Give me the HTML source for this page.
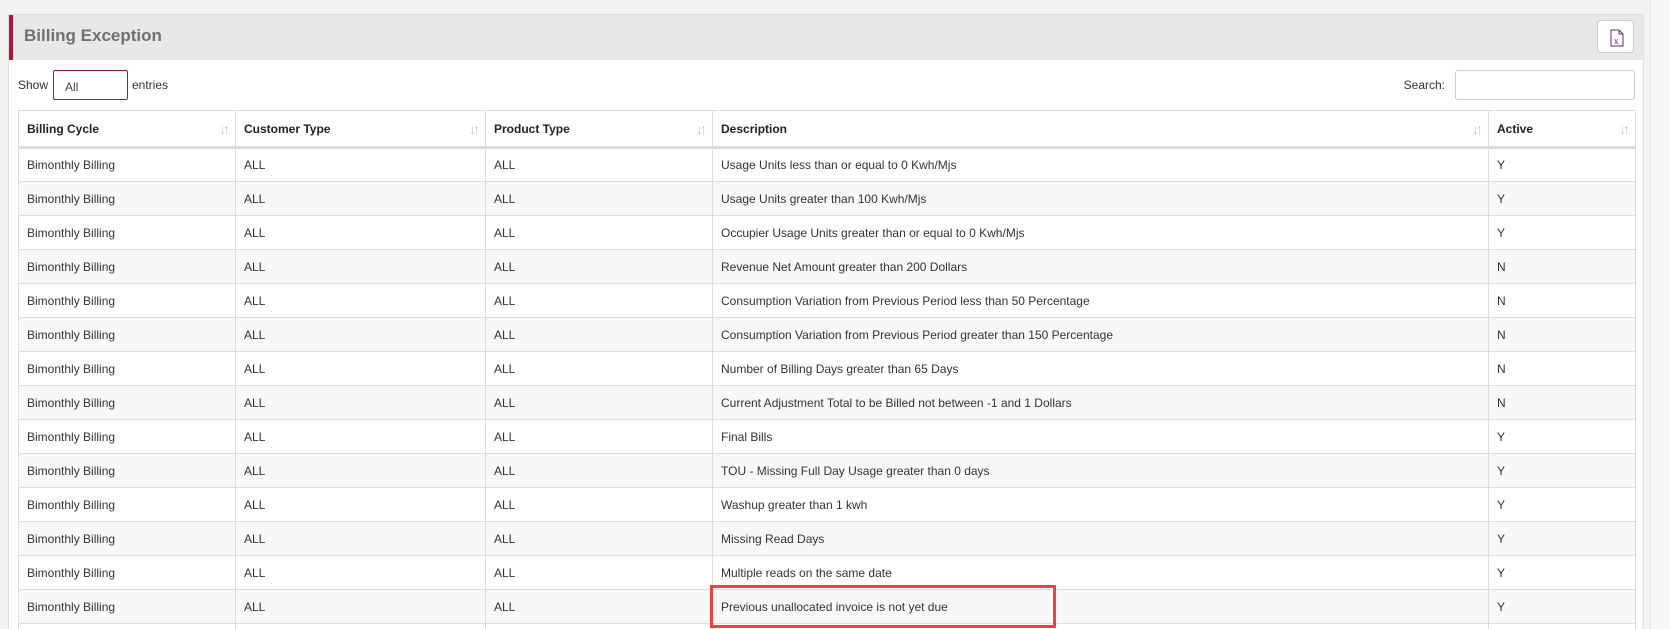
<!DOCTYPE html>
<html style="height:629px;overflow:hidden"><head><style>
*{box-sizing:border-box;margin:0;padding:0}
body{width:1670px;height:629px;background:#f3f3f3;font-family:"Liberation Sans",sans-serif;font-size:12px;color:#333;overflow:hidden;position:relative}
.panel{position:absolute;left:8px;top:14px;width:1636px;height:615px;background:#fff;border:1px solid #e0e0e0;border-bottom:none;overflow:hidden}
.hdr{height:45px;background:#e8e8e8;border-left:4px solid #b0163a;position:relative}
.hdr h2{position:absolute;left:11px;top:11px;font-size:17px;font-weight:bold;color:#707070}
.xbtn{position:absolute;right:9px;top:5px;width:37px;height:33px;background:#fff;border:1px solid #ccc;border-radius:4px}
.show{position:absolute;left:9px;top:55px;width:1617px;height:30px}
.show span{position:absolute;top:8px}
.sel{position:absolute;left:35px;top:0;width:75px;height:30px;border:1px solid #a01830;border-radius:2px;padding:9px 11px;color:#444}
.search{position:absolute;right:0;top:0;width:180px;height:30px;border:1px solid #ccc;border-radius:3px}
table{position:absolute;left:9px;top:95px;border-collapse:collapse;width:1617px;table-layout:fixed}
th,td{border:1px solid #ddd;text-align:left;padding:0 8px;height:34px;position:relative;white-space:nowrap;overflow:hidden}
th{height:37px;border-bottom:3px solid #ddd;color:#222;font-weight:bold}
th i{position:absolute;right:8px;top:10px;color:#c8c8c8;font-style:normal;font-weight:bold;font-size:14px;letter-spacing:-3px}
tr:nth-child(odd) td{background:#f8f8f8}
.hl{position:absolute;left:710px;top:585px;width:346px;height:43px;border:3px solid #f04040}
.sb{position:absolute;left:1650px;top:0;width:20px;height:629px;background:#f7f7f7;border-left:1px solid #e4e4e4}
</style></head><body>
<div class="sb"></div>
<div class="panel">
<div class="hdr"><h2>Billing Exception</h2>
<div class="xbtn"><svg width="37" height="33" viewBox="0 0 37 33"><path d="M13 9h8l4 4v12H13z" fill="none" stroke="#6a2a7a" stroke-width="1"/><path d="M21 9v4h4" fill="none" stroke="#6a2a7a" stroke-width="1"/><text x="16" y="23" font-size="9" font-family="Liberation Serif" fill="#333">x</text></svg></div></div>
<div class="show"><span style="left:0">Show</span><div class="sel">All</div><span style="left:114px">entries</span><span style="right:190px">Search:</span><div class="search"></div></div>
<table>
<colgroup><col style="width:217px"><col style="width:250px"><col style="width:227px"><col style="width:776px"><col style="width:147px"></colgroup>
<tr><th>Billing Cycle<i>↓↑</i></th><th>Customer Type<i>↓↑</i></th><th>Product Type<i>↓↑</i></th><th>Description<i>↓↑</i></th><th>Active<i>↓↑</i></th></tr>
<tr><td>Bimonthly Billing</td><td>ALL</td><td>ALL</td><td>Usage Units less than or equal to 0 Kwh/Mjs</td><td>Y</td></tr>
<tr><td>Bimonthly Billing</td><td>ALL</td><td>ALL</td><td>Usage Units greater than 100 Kwh/Mjs</td><td>Y</td></tr>
<tr><td>Bimonthly Billing</td><td>ALL</td><td>ALL</td><td>Occupier Usage Units greater than or equal to 0 Kwh/Mjs</td><td>Y</td></tr>
<tr><td>Bimonthly Billing</td><td>ALL</td><td>ALL</td><td>Revenue Net Amount greater than 200 Dollars</td><td>N</td></tr>
<tr><td>Bimonthly Billing</td><td>ALL</td><td>ALL</td><td>Consumption Variation from Previous Period less than 50 Percentage</td><td>N</td></tr>
<tr><td>Bimonthly Billing</td><td>ALL</td><td>ALL</td><td>Consumption Variation from Previous Period greater than 150 Percentage</td><td>N</td></tr>
<tr><td>Bimonthly Billing</td><td>ALL</td><td>ALL</td><td>Number of Billing Days greater than 65 Days</td><td>N</td></tr>
<tr><td>Bimonthly Billing</td><td>ALL</td><td>ALL</td><td>Current Adjustment Total to be Billed not between -1 and 1 Dollars</td><td>N</td></tr>
<tr><td>Bimonthly Billing</td><td>ALL</td><td>ALL</td><td>Final Bills</td><td>Y</td></tr>
<tr><td>Bimonthly Billing</td><td>ALL</td><td>ALL</td><td>TOU - Missing Full Day Usage greater than 0 days</td><td>Y</td></tr>
<tr><td>Bimonthly Billing</td><td>ALL</td><td>ALL</td><td>Washup greater than 1 kwh</td><td>Y</td></tr>
<tr><td>Bimonthly Billing</td><td>ALL</td><td>ALL</td><td>Missing Read Days</td><td>Y</td></tr>
<tr><td>Bimonthly Billing</td><td>ALL</td><td>ALL</td><td>Multiple reads on the same date</td><td>Y</td></tr>
<tr><td>Bimonthly Billing</td><td>ALL</td><td>ALL</td><td>Previous unallocated invoice is not yet due</td><td>Y</td></tr>
<tr><td>&nbsp;</td><td></td><td></td><td></td><td></td></tr>
</table>
</div>
<div class="hl"></div>
</body></html>
